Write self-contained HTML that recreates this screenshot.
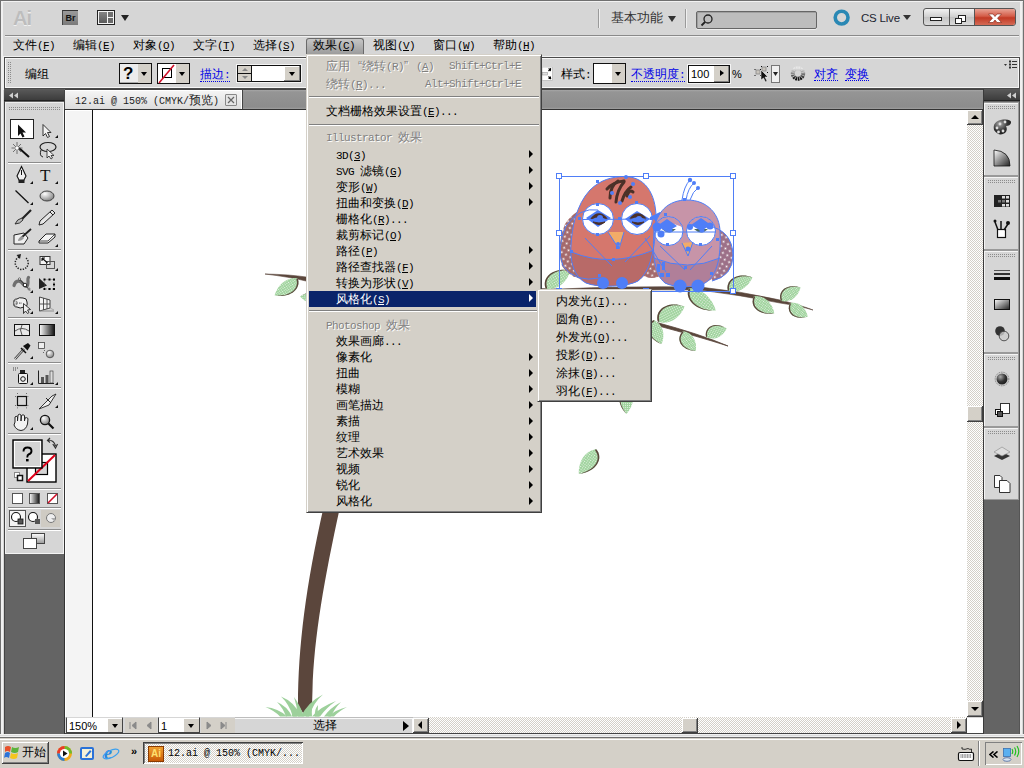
<!DOCTYPE html>
<html><head><meta charset="utf-8">
<style>
*{box-sizing:border-box;margin:0;padding:0}
html,body{width:1024px;height:768px;overflow:hidden;background:#d6d6d6}
body{position:relative;font-family:"Liberation Sans",sans-serif;font-size:12px;color:#000}
.a{position:absolute}
.m{font-family:"Liberation Mono",monospace;font-size:11px;letter-spacing:-0.6px}
.t{white-space:nowrap;line-height:12px}
u{text-decoration:underline}
.hatch{background:repeating-conic-gradient(#d4d0c8 0 25%,#fff 0 50%) 0 0/2px 2px}
.dots{background:linear-gradient(90deg,transparent 1px,#d6d6d6 1px) 0 0/2px 2px,linear-gradient(transparent 1px,#d6d6d6 1px) 0 0/2px 2px,#8c8c8c}
</style></head><body>
<!-- window frame -->
<div class="a" style="left:0;top:0;width:1024px;height:738px;background:#d6d6d6;border:1px solid #707070"></div>
<div class="a" style="left:1px;top:1px;width:1022px;height:1px;background:#f2f2f2"></div>
<div class="a" style="left:1px;top:1px;width:2px;height:735px;background:#f0f0f0"></div>
<div class="a" style="left:1020px;top:1px;width:2px;height:735px;background:#f0f0f0"></div>

<!-- app bar -->
<div id="appbar">
<div class="a" style="left:13px;top:7px;font:bold 20px 'Liberation Sans',sans-serif;color:#bdbdbd;letter-spacing:-1px;text-shadow:0 1px 0 #f0f0f0">Ai</div>
<div class="a" style="left:62px;top:10px;width:16px;height:15px;background:linear-gradient(#9a9a9a,#7a7a7a);border-top:1px solid #333;border-left:1px solid #444;font:bold 9px 'Liberation Sans',sans-serif;color:#111;text-align:center;line-height:14px">Br</div>
<div class="a" style="left:97px;top:10px;width:18px;height:15px;border:1px solid #222;background:#f4f4f4"></div>
<div class="a" style="left:99px;top:12px;width:8px;height:11px;background:linear-gradient(#858585,#5a5a5a)"></div>
<div class="a" style="left:108px;top:12px;width:5px;height:5px;background:#707070"></div>
<div class="a" style="left:108px;top:18px;width:5px;height:5px;background:#6a6a6a"></div>
<div class="a" style="left:121px;top:15px;width:0;height:0;border-left:4px solid transparent;border-right:4px solid transparent;border-top:6px solid #222"></div>
<div class="a" style="left:598px;top:9px;width:1px;height:19px;background:#9a9a9a;box-shadow:1px 0 0 #f0f0f0"></div>
<div class="a t" style="left:611px;top:12px;font-size:13px;color:#333">基本功能</div>
<div class="a" style="left:668px;top:16px;width:0;height:0;border-left:4px solid transparent;border-right:4px solid transparent;border-top:6px solid #333"></div>
<div class="a" style="left:685px;top:9px;width:1px;height:19px;background:#9a9a9a;box-shadow:1px 0 0 #f0f0f0"></div>
<div class="a" style="left:696px;top:11px;width:121px;height:18px;background:#bdbdbd;border:1px solid #666;border-radius:2px;box-shadow:inset 1px 1px 0 #a0a0a0,0 1px 0 #eee"></div>
<svg class="a" style="left:700px;top:13px" width="14" height="14"><circle cx="8" cy="6" r="4" fill="none" stroke="#222" stroke-width="1.3"/><line x1="5" y1="9" x2="1.5" y2="12.5" stroke="#222" stroke-width="1.8"/></svg>
<svg class="a" style="left:833px;top:9px" width="18" height="18"><circle cx="8.6" cy="8.6" r="6.4" fill="none" stroke="#2a88b4" stroke-width="3.6"/></svg>
<div class="a t" style="left:861px;top:12px;font-size:11.5px;color:#1c2530;letter-spacing:-0.2px">CS Live</div>
<div class="a" style="left:903px;top:15px;width:0;height:0;border-left:4px solid transparent;border-right:4px solid transparent;border-top:5px solid #333"></div>
<div class="a" style="left:923px;top:8px;width:93px;height:18px;border:1px solid #555;border-radius:3px;overflow:hidden;background:linear-gradient(#f2f2f2,#cfcfcf 50%,#c2c2c2 51%,#dadada)">
 <div class="a" style="left:25px;top:0;width:1px;height:16px;background:#555"></div>
 <div class="a" style="left:50px;top:0;width:42px;height:16px;background:linear-gradient(#e8a294,#d45c48 45%,#c23a25 55%,#d46a55);border-left:1px solid #555"></div>
 <div class="a" style="left:6px;top:8px;width:12px;height:4px;border:1px solid #222;background:#fff"></div>
 <div class="a" style="left:34px;top:6px;width:8px;height:7px;border:1px solid #222;background:#fff"></div>
 <div class="a" style="left:31px;top:9px;width:7px;height:6px;border:1px solid #222;background:#fff"></div>
 <svg class="a" style="left:58px;top:3px" width="26" height="12"><path d="M6.5 2 L11 2 L13 4.5 L15 2 L19.5 2 L15.5 6.2 L19.5 10.5 L15 10.5 L13 8 L11 10.5 L6.5 10.5 L10.5 6.2Z" fill="#fff" stroke="#7a2010" stroke-width="0.6"/></svg>
</div>
<div class="a" style="left:5px;top:35px;width:1014px;height:1px;background:#8a8a8a"></div>
<div class="a" style="left:5px;top:36px;width:1014px;height:1px;background:#f0f0f0"></div>
</div>

<!-- menu bar -->
<div id="menubar">
<div class="a" style="left:306px;top:38px;width:58px;height:16px;border:1px solid #6a6a6a;border-bottom:none;border-radius:3px 3px 0 0;background:linear-gradient(#c6c6c6,#9c9c9c)"></div>
<div class="a t" style="left:13px;top:39px">文件<span class="m">(<u>F</u>)</span></div>
<div class="a t" style="left:73px;top:39px">编辑<span class="m">(<u>E</u>)</span></div>
<div class="a t" style="left:133px;top:39px">对象<span class="m">(<u>O</u>)</span></div>
<div class="a t" style="left:193px;top:39px">文字<span class="m">(<u>T</u>)</span></div>
<div class="a t" style="left:253px;top:39px">选择<span class="m">(<u>S</u>)</span></div>
<div class="a t" style="left:313px;top:39px">效果<span class="m">(<u>C</u>)</span></div>
<div class="a t" style="left:373px;top:39px">视图<span class="m">(<u>V</u>)</span></div>
<div class="a t" style="left:433px;top:39px">窗口<span class="m">(<u>W</u>)</span></div>
<div class="a t" style="left:493px;top:39px">帮助<span class="m">(<u>H</u>)</span></div>
</div>

<!-- control bar -->
<div id="ctrl">
<div class="a" style="left:4px;top:57px;width:1016px;height:32px;border:1px solid #4a4a4a;background:#d6d6d6;box-shadow:inset 1px 1px 0 #f6f6f6,inset -1px -1px 0 #f6f6f6,0 0 0 1px #f0f0f0"></div>
<div class="a dots" style="left:8px;top:62px;width:4px;height:22px"></div>
<div class="a t" style="left:25px;top:68px">编组</div>
<div class="a" style="left:119px;top:63px;width:33px;height:21px;border:1px solid #111;background:#ececec;box-shadow:inset -1px -1px 0 #aaa"></div>
<div class="a" style="left:138px;top:64px;width:13px;height:19px;background:#d4d0c8"></div>
<div class="a t" style="left:123px;top:64px;font:bold 17px 'Liberation Sans',sans-serif;line-height:20px">?</div>
<div class="a" style="left:141px;top:72px;border-left:3px solid transparent;border-right:3px solid transparent;border-top:4px solid #000"></div>
<div class="a" style="left:157px;top:63px;width:33px;height:21px;border:1px solid #111;background:#fff"></div>
<div class="a" style="left:176px;top:64px;width:13px;height:19px;background:#d4d0c8"></div>
<div class="a" style="left:162px;top:68px;width:10px;height:10px;border:1px solid #000"></div>
<svg class="a" style="left:158px;top:64px" width="18" height="20"><line x1="1" y1="19" x2="16" y2="1" stroke="#d0102a" stroke-width="1.6"/></svg>
<div class="a" style="left:179px;top:72px;border-left:3px solid transparent;border-right:3px solid transparent;border-top:4px solid #000"></div>
<div class="a t" style="left:200px;top:68px;color:#0000e6;border-bottom:1px dotted #0000e6;line-height:12px">描边<span class="m">:</span></div>
<div class="a" style="left:237px;top:65px;width:64px;height:17px;border:1px solid #111;background:#fff;box-shadow:0 0 0 1px #f4f4f4"></div>
<div class="a" style="left:238px;top:66px;width:14px;height:15px;background:#d4d0c8;border-right:1px solid #111"></div>
<div class="a" style="left:238px;top:73px;width:14px;height:1px;background:#111"></div>
<div class="a" style="left:242px;top:68px;border-left:3px solid transparent;border-right:3px solid transparent;border-bottom:3px solid #888"></div>
<div class="a" style="left:242px;top:76px;border-left:3px solid transparent;border-right:3px solid transparent;border-top:3px solid #888"></div>
<div class="a" style="left:284px;top:66px;width:16px;height:15px;background:#d4d0c8;box-shadow:inset -1px -1px 0 #808080,inset 1px 1px 0 #fff"></div>
<div class="a" style="left:289px;top:72px;border-left:3px solid transparent;border-right:3px solid transparent;border-top:4px solid #000"></div>
<!-- right part -->
<svg class="a" style="left:542px;top:67px" width="11" height="14"><rect x="0" y="0" width="10.5" height="13.5" fill="#fff" stroke="#bbb" stroke-width="0.8"/><rect x="0.5" y="5.5" width="5" height="2.5" fill="#e0e0e0" stroke="#999" stroke-width="0.6"/><path d="M6 1.5 L9 1.5 L9 4.5Z M6 12 L9 12 L9 9Z" fill="#000"/><path d="M9 1.5 L6.5 4 M9 12 L6.5 9.5" stroke="#000" stroke-width="1.2"/></svg>
<div class="a t" style="left:561px;top:68px">样式<span class="m">:</span></div>
<div class="a" style="left:593px;top:63px;width:33px;height:21px;border:1px solid #111;background:#fff"></div>
<div class="a" style="left:612px;top:64px;width:13px;height:19px;background:#d4d0c8"></div>
<div class="a" style="left:615px;top:72px;border-left:3px solid transparent;border-right:3px solid transparent;border-top:4px solid #000"></div>
<div class="a t" style="left:631px;top:68px;color:#0000e6;border-bottom:1px dotted #0000e6">不透明度<span class="m">:</span></div>
<div class="a" style="left:688px;top:65px;width:42px;height:18px;border:1px solid #111;background:#fff;box-shadow:0 0 0 1px #f4f4f4"></div>
<div class="a" style="left:714px;top:66px;width:15px;height:16px;background:#d4d0c8;box-shadow:inset -1px -1px 0 #808080"></div>
<div class="a" style="left:720px;top:70px;border-top:3px solid transparent;border-bottom:3px solid transparent;border-left:4px solid #000"></div>
<div class="a t" style="left:691px;top:68px;font-size:11px">100</div>
<div class="a t" style="left:732px;top:68px;font-size:11px">%</div>
<svg class="a" style="left:754px;top:64px" width="28" height="20" viewBox="754 64 28 20"><rect x="756" y="70" width="4" height="4" fill="#c8c4bc" stroke="#888" stroke-width="0.8"/><rect x="762" y="67" width="4" height="4" fill="#c8c4bc" stroke="#888" stroke-width="0.8"/><g fill="#111"><rect x="754.5" y="69" width="1" height="1"/><rect x="754.5" y="75" width="1" height="1"/><rect x="760" y="69" width="1" height="1"/><rect x="760" y="75" width="1" height="1"/><rect x="761" y="66" width="1" height="1"/><rect x="767" y="66" width="1" height="1"/><rect x="767" y="72" width="1" height="1"/></g><path d="M761 70 L768 77 L765 77 L767 81 L765.5 82 L763.5 78 L761 80Z" fill="#111" stroke="#fff" stroke-width="0.5"/><rect x="771.5" y="65.5" width="8" height="17" fill="#f0f0f0" stroke="#777"/><path d="M773 72 L778 72 L775.5 76Z" fill="#222"/></svg>
<svg class="a" style="left:790px;top:66px" width="16" height="16"><defs><linearGradient id="rg1" x1="0" y1="0" x2="0" y2="1"><stop offset="0" stop-color="#e8e8e8"/><stop offset="0.5" stop-color="#888"/><stop offset="1" stop-color="#111"/></linearGradient></defs><circle cx="8" cy="7.5" r="5.2" fill="none" stroke="url(#rg1)" stroke-width="4" stroke-dasharray="1.6 0.6"/></svg>
<div class="a t" style="left:814px;top:68px;color:#0000e6;border-bottom:1px dotted #0000e6">对齐</div>
<div class="a t" style="left:845px;top:68px;color:#0000e6;border-bottom:1px dotted #0000e6">变换</div>
<svg class="a" style="left:1003px;top:60px" width="15" height="10"><path d="M1 4 L4 4 L2.5 6Z" fill="#333"/><g fill="#333"><rect x="6" y="0.5" width="2" height="2"/><rect x="6" y="3.5" width="2" height="2"/><rect x="6" y="6.5" width="2" height="2"/><rect x="9" y="1" width="5" height="1"/><rect x="9" y="4" width="5" height="1"/><rect x="9" y="7" width="5" height="1"/></g></svg>
</div>

<!-- left tools -->
<div id="tools">
<div class="a" style="left:4px;top:89px;width:61px;height:645px;background:#646464;border-left:1px solid #444"></div>
<div class="a" style="left:4px;top:89px;width:60px;height:12px;background:linear-gradient(#5a5a5a,#3c3c3c);border-bottom:1px solid #222"></div>
<svg class="a" style="left:8px;top:92px" width="12" height="7"><path d="M5 0.5 L1 3.5 L5 6.5Z M10 0.5 L6 3.5 L10 6.5Z" fill="#cfcfcf"/></svg>
<div class="a" style="left:5px;top:102px;width:59px;height:452px;background:#d6d6d6;box-shadow:inset 1px 1px 0 #f0f0f0,inset -1px -1px 0 #f4f4f4"></div>
<div class="a" style="left:64px;top:101px;width:1px;height:633px;background:#333"></div>
<div class="a dots" style="left:9px;top:107px;width:52px;height:3px"></div>
<svg class="a" style="left:4px;top:89px" width="61" height="470" viewBox="4 89 61 470">
<defs>
<linearGradient id="gg" x1="0" y1="0" x2="0" y2="1"><stop offset="0" stop-color="#fff"/><stop offset="1" stop-color="#999"/></linearGradient>
<linearGradient id="gh" x1="0" y1="0" x2="1" y2="0"><stop offset="0" stop-color="#fff"/><stop offset="1" stop-color="#111"/></linearGradient>
<radialGradient id="gb" cx="0.35" cy="0.3" r="0.8"><stop offset="0" stop-color="#fff"/><stop offset="1" stop-color="#777"/></radialGradient>
</defs>
<g stroke="#8c8c8c" stroke-width="1">
<line x1="8" y1="162.5" x2="61" y2="162.5"/><line x1="8" y1="317.5" x2="61" y2="317.5"/><line x1="8" y1="249.5" x2="61" y2="249.5"/>
<line x1="8" y1="362.5" x2="61" y2="362.5"/><line x1="8" y1="387.5" x2="61" y2="387.5"/><line x1="8" y1="433.5" x2="61" y2="433.5"/>
<line x1="8" y1="488.5" x2="61" y2="488.5"/><line x1="8" y1="507.5" x2="61" y2="507.5"/><line x1="8" y1="529.5" x2="61" y2="529.5"/>
</g>
<g stroke="#fff" stroke-width="1">
<line x1="8" y1="163.5" x2="61" y2="163.5"/><line x1="8" y1="318.5" x2="61" y2="318.5"/><line x1="8" y1="250.5" x2="61" y2="250.5"/>
<line x1="8" y1="363.5" x2="61" y2="363.5"/><line x1="8" y1="388.5" x2="61" y2="388.5"/><line x1="8" y1="434.5" x2="61" y2="434.5"/>
<line x1="8" y1="489.5" x2="61" y2="489.5"/><line x1="8" y1="508.5" x2="61" y2="508.5"/><line x1="8" y1="530.5" x2="61" y2="530.5"/>
</g>
<!-- corner triangles -->
<g fill="#111">
<path d="M58 135 L58 138 L55 138Z"/><path d="M33 181 L33 184 L30 184Z"/><path d="M58 181 L58 184 L55 184Z"/>
<path d="M33 202 L33 205 L30 205Z"/><path d="M58 202 L58 205 L55 205Z"/><path d="M58 223 L58 226 L55 226Z"/>
<path d="M58 244 L58 247 L55 247Z"/><path d="M33 268 L33 271 L30 271Z"/><path d="M58 268 L58 271 L55 271Z"/>
<path d="M33 290 L33 293 L30 293Z"/><path d="M33 311 L33 314 L30 314Z"/><path d="M58 311 L58 314 L55 314Z"/>
<path d="M33 356 L33 359 L30 359Z"/><path d="M33 382 L33 385 L30 385Z"/><path d="M58 382 L58 385 L55 385Z"/>
<path d="M58 405 L58 408 L55 408Z"/><path d="M33 427 L33 430 L30 430Z"/>
</g>
<!-- select -->
<rect x="10.5" y="119.5" width="23" height="19" fill="#fff" stroke="#222"/>
<path d="M18 124.5 L18 136 L20.5 133.5 L22.5 137.5 L24.5 136.5 L22.5 132.5 L26 132.5Z" fill="#111"/>
<path d="M43 124.5 L43 136 L45.5 133.5 L47.5 137.5 L49.5 136.5 L47.5 132.5 L51 132.5Z" fill="#f2f2f2" stroke="#222" stroke-width="0.9"/>
<!-- wand -->
<path d="M19 148 L29 157" stroke="#111" stroke-width="2"/><path d="M17 142 L17 154 M11.5 148 L22.5 148 M13 144 L21 152 M21 144 L13 152" stroke="#555" stroke-width="0.8"/><circle cx="17" cy="148" r="1.5" fill="#fff"/>
<!-- lasso -->
<ellipse cx="48" cy="147" rx="8" ry="4.5" fill="none" stroke="#222" stroke-width="1.2"/><path d="M41 150 Q39 156 43 157" fill="none" stroke="#222"/><path d="M47 149 L47 158 L49 156 L51 159 L52.5 158 L51 155.5 L54 155.5Z" fill="#eee" stroke="#222" stroke-width="0.8"/>
<!-- pen -->
<path d="M21.5 166.5 L26 176 L24 180 L19 180 L17 176Z" fill="#f0f0f0" stroke="#111" stroke-width="1.1"/><line x1="21.5" y1="170" x2="21.5" y2="175" stroke="#111"/><rect x="18.5" y="180" width="6" height="3" fill="#222"/>
<!-- T -->
<text x="40" y="181" font-family="Liberation Serif" font-size="17" fill="#111">T</text>
<!-- line -->
<line x1="15.5" y1="190.5" x2="28.5" y2="203" stroke="#111" stroke-width="1.3"/>
<!-- ellipse -->
<ellipse cx="47" cy="196" rx="7" ry="5" fill="url(#gb)" stroke="#333" stroke-width="0.9"/>
<!-- brush -->
<path d="M31 210 L22 219" stroke="#222" stroke-width="2.2"/><path d="M22 218 Q17 219 15 224 Q20 224 23 220Z" fill="#bbb" stroke="#222" stroke-width="0.9"/>
<!-- pencil -->
<path d="M52 210 L55 213 L43 224 L39 225 L40 221Z" fill="#e6e6e6" stroke="#222" stroke-width="1"/><path d="M50 212 L53 215" stroke="#222"/>
<!-- blob brush -->
<path d="M14 235 L24 233 L28 238 L24 244 L14 244Z" fill="#efefef" stroke="#222" stroke-width="1"/><path d="M31 229 L21 238" stroke="#222" stroke-width="1.8"/><path d="M22 236 Q18 238 18 241 Q22 241 24 238Z" fill="#999"/>
<!-- eraser -->
<path d="M39 241 L46 234 L55 234 L55 237 L48 243 L39 243Z" fill="#f4f4f4" stroke="#222" stroke-width="1"/><path d="M39 241 L48 241 L55 234" fill="none" stroke="#222" stroke-width="0.8"/>
<!-- rotate -->
<path d="M19 257 A6.5 6.5 0 1 0 26 258" fill="none" stroke="#222" stroke-width="1.5" stroke-dasharray="1.3 1.3"/><path d="M16.5 255 L21 254 L20 259Z" fill="#222"/>
<!-- scale -->
<rect x="40" y="256.5" width="10" height="8" fill="#f6f6f6" stroke="#333"/><rect x="46.5" y="261.5" width="8" height="7" fill="none" stroke="#555"/><path d="M42 258 L47.5 263 M42 258 L42 261 M42 258 L45 258" stroke="#111" stroke-width="1.1"/>
<!-- warp -->
<path d="M14 285.5 C15.5 280 20 280 23 284 C26 288 28 287 28 282 C28 280 27.5 278.5 28.5 277.5" fill="none" stroke="#707070" stroke-width="3.2" stroke-linecap="round"/>
<path d="M19.5 279 L30 290.5" stroke="#222" stroke-width="0.8"/><circle cx="19.5" cy="279" r="1.1" fill="#fff" stroke="#222" stroke-width="0.6"/><circle cx="25" cy="285" r="1.8" fill="#fff" stroke="#111" stroke-width="0.9"/><circle cx="29" cy="289" r="1" fill="#fff" stroke="#222" stroke-width="0.6"/>
<!-- free transform -->
<path d="M39 278 L39 289 L47 285.5Z" fill="#222"/>
<rect x="44.5" y="279.5" width="9.5" height="9.5" fill="none" stroke="#555" stroke-width="0.6" stroke-dasharray="1 1"/>
<g fill="#000"><rect x="43.5" y="278.5" width="2" height="2"/><rect x="48.5" y="278.5" width="2" height="2"/><rect x="53" y="278.5" width="2" height="2"/><rect x="53" y="283.5" width="2" height="2"/><rect x="43.5" y="288" width="2" height="2"/><rect x="48.5" y="288" width="2" height="2"/><rect x="53" y="288" width="2" height="2"/></g>
<!-- shape builder -->
<path d="M14 303 Q13 299 17 299 Q19 297 23 298 Q27 298 27 302 Q28 307 24 307 Q20 309 17 307 Q13 307 14 303Z" fill="#f0f0f0" stroke="#222" stroke-width="1"/><circle cx="15.5" cy="303" r="2" fill="#fff" stroke="#222" stroke-width="0.5"/><circle cx="15" cy="303" r="0.6" fill="#111"/><circle cx="16.5" cy="303" r="0.6" fill="#111"/><circle cx="19.5" cy="303" r="0.5" fill="#111"/><circle cx="21" cy="303" r="0.5" fill="#111"/>
<path d="M23.5 303.5 L23.5 313.5 L25.5 311 L27.5 313.5 L29 312.5 L27.5 310 L30.5 309.5Z" fill="#eee" stroke="#111" stroke-width="0.8"/>
<!-- perspective -->
<path d="M39.5 297 L50 300 L50 308 L39.5 311Z" fill="#f2f2f2" stroke="#333" stroke-width="0.9"/><path d="M43.5 298 L43.5 310 M47 299 L47 309 M39.5 304 L50 304" stroke="#444" stroke-width="0.9"/><path d="M39.5 311 L54 311" stroke="#888" stroke-width="0.9"/><path d="M50 308 L54 310" stroke="#999" stroke-width="0.8"/>
<!-- mesh -->
<rect x="14.5" y="324.5" width="15" height="11" fill="#e8e8e8" stroke="#111"/><path d="M15 331 Q22 326 29 331 M22 325 Q19 330 22 335" fill="none" stroke="#555"/>
<!-- gradient -->
<rect x="39.5" y="324.5" width="15" height="11" fill="url(#gh)" stroke="#111"/>
<!-- eyedropper -->
<path d="M15 359 L24 349" stroke="#444" stroke-width="2.6"/><path d="M15 359 L24 349" stroke="#ddd" stroke-width="1"/><path d="M23 346 L28 343 L30.5 345.5 L27.5 350.5Z" fill="#111"/><path d="M21 348 L26 353" stroke="#111" stroke-width="1.5"/>
<!-- blend -->
<rect x="38.5" y="342.5" width="6" height="6" fill="#eee" stroke="#444" stroke-width="0.8"/><circle cx="50" cy="354" r="3.8" fill="url(#gb)" stroke="#444" stroke-width="0.8"/><path d="M44 350 L45 351 M46 352 L47 353 M43 352 L44 353" stroke="#666"/>
<!-- symbol sprayer -->
<rect x="18.5" y="373.5" width="9" height="10" rx="1" fill="#f0f0f0" stroke="#111"/><circle cx="23" cy="379" r="2.3" fill="none" stroke="#111"/><rect x="20" y="370" width="5" height="3" fill="#222"/><path d="M13 368 h1 M15 368 h1 M17 368 h1 M13 370 h1 M15 370 h1" stroke="#444"/>
<!-- graph -->
<path d="M38.5 370.5 L38.5 383.5 L54 383.5" fill="none" stroke="#222"/><rect x="41" y="377" width="3" height="6" fill="#555"/><rect x="45.5" y="375" width="3" height="8" fill="#555"/><rect x="50" y="371" width="3" height="12" fill="#ddd" stroke="#333" stroke-width="0.6"/>
<!-- artboard -->
<rect x="17.5" y="396.5" width="9" height="9" fill="none" stroke="#111" stroke-width="1.2"/><path d="M15 396.5 h1.5 M27.5 396.5 h1.5 M15 405.5 h1.5 M27.5 405.5 h1.5 M17.5 393 v1.5 M26.5 393 v1.5 M17.5 407.5 v1.5 M26.5 407.5 v1.5" stroke="#555" stroke-dasharray="0.8 0.8"/>
<!-- slice -->
<path d="M39 409 L52 396 L56 394 L49 405Z" fill="#eee" stroke="#222" stroke-width="0.9"/><path d="M46 398 L51 403" stroke="#222"/>
<!-- hand -->
<path d="M15 422 L15 417 Q16 415.5 17.5 417 L17.5 421 L18 415 Q19.5 413.5 21 415 L21 421 L21.5 415.5 Q23 414 24.5 415.5 L24.5 421 L25 418 Q26.5 417 28 418.5 L27.5 424 Q26 430 21 430.5 Q16 430 14 425Z" fill="#f2f2f2" stroke="#222" stroke-width="1"/>
<!-- zoom -->
<circle cx="45" cy="420" r="4.6" fill="url(#gb)" stroke="#111" stroke-width="1.3"/><line x1="48.5" y1="423.5" x2="53.5" y2="428.5" stroke="#111" stroke-width="2.2"/>
<!-- fill/stroke -->
<rect x="27" y="454" width="29" height="28" fill="#fff" stroke="#000" stroke-width="1.4"/>
<rect x="35.5" y="462.5" width="12" height="12" fill="#d4d4d4" stroke="#000" stroke-width="1.2"/>
<line x1="28" y1="481" x2="55" y2="455" stroke="#e0001a" stroke-width="2"/>
<rect x="13" y="440" width="29" height="28" fill="#d4d4d4" stroke="#000" stroke-width="1.4"/>
<rect x="14.5" y="441.5" width="26" height="25" fill="none" stroke="#fff" stroke-width="1"/>
<path d="M23.5 451.5 Q23.5 447.5 27.5 447.5 Q31.5 447.5 31.5 451 Q31.5 453.5 28.5 454.5 Q27.3 455 27.3 457.5" fill="none" stroke="#000" stroke-width="1.9"/><rect x="26" y="459" width="2.6" height="2.4" fill="#000"/>
<path d="M48 440 Q54 440 55.5 446 M52.8 444 L55.5 448 L57.5 444 M50 438 L47.5 440.5 L50 442.5" fill="none" stroke="#333" stroke-width="1.2"/>
<rect x="14.5" y="472.5" width="5" height="5" fill="#fff" stroke="#888"/><rect x="17.5" y="475.5" width="5" height="5" fill="#fff" stroke="#111" stroke-width="1.5"/>
<!-- color/gradient/none -->
<rect x="12.5" y="493.5" width="10" height="10" fill="#fff" stroke="#555"/>
<rect x="29.5" y="493.5" width="10" height="10" fill="url(#gh)" stroke="#555"/>
<rect x="47.5" y="493.5" width="10" height="10" fill="#fff" stroke="#555"/><line x1="48" y1="503" x2="57" y2="494" stroke="#d0102a" stroke-width="1.6"/>
<!-- draw modes -->
<rect x="9.5" y="510.5" width="16" height="16" fill="#f4f4f4" stroke="#555"/>
<rect x="41" y="510" width="19" height="17" fill="#cfcbc3"/>
<circle cx="16" cy="517" r="4.5" fill="#fff" stroke="#111" stroke-width="1.1"/><rect x="18" y="519" width="5" height="5" fill="#555" stroke="#111" stroke-width="0.8"/>
<circle cx="33" cy="517" r="4.5" fill="#fff" stroke="#111" stroke-width="1.1"/><rect x="35" y="519" width="5" height="5" fill="#555"/>
<circle cx="51" cy="518" r="4.5" fill="#eee" stroke="#777" stroke-width="1"/><path d="M51 518 h4 v4" fill="#aaa"/>
<!-- screen mode -->
<rect x="31.5" y="533.5" width="13" height="10" fill="url(#gg)" stroke="#444"/>
<rect x="23.5" y="538.5" width="13" height="10" fill="#fff" stroke="#444"/>
</svg>
</div>

<!-- document -->
<div id="doc">
<div class="a" style="left:65px;top:89px;width:919px;height:21px;background:linear-gradient(#a6a6a6,#959595 10%,#8c8c8c 90%,#a0a0a0);border-top:1px solid #444;border-bottom:1px solid #333"></div>
<div class="a" style="left:64px;top:90px;width:179px;height:19px;background:linear-gradient(#f6f6f6,#dcdcdc);border-left:1px solid #444;border-right:1px solid #444;box-shadow:inset -1px 0 0 #fff,inset 0 1px 0 #fff"></div>
<div class="a t" style="left:75px;top:94px;font-family:'Liberation Mono',monospace;font-size:10px;color:#222;line-height:12px">12.ai @ 150% (CMYK/<span style="font-family:'Liberation Sans';font-size:12px">预览</span>)</div>
<div class="a" style="left:225px;top:94px;width:12px;height:12px;border:1px solid #888;background:#e4e4e4;border-radius:1px"></div>
<svg class="a" style="left:225px;top:94px" width="12" height="12"><path d="M3 3 L9 9 M9 3 L3 9" stroke="#666" stroke-width="1.2"/></svg>
<!-- canvas -->
<div class="a" style="left:64px;top:110px;width:903px;height:607px;background:#f4f4f4;border-left:1px solid #333;box-shadow:inset 1px 1px 0 #fff"></div>
<div class="a" style="left:92px;top:110px;width:875px;height:607px;background:#fff;border-left:1px solid #111"></div>
<!-- vertical scrollbar -->
<div class="a hatch" style="left:967px;top:110px;width:16px;height:607px"></div>
<div class="a" style="left:967px;top:110px;width:16px;height:15px;background:#d4d0c8;box-shadow:inset -1px -1px 0 #404040,inset 1px 1px 0 #fff,inset -2px -2px 0 #808080"></div>
<div class="a" style="left:971px;top:115px;border-left:4px solid transparent;border-right:4px solid transparent;border-bottom:4px solid #000"></div>
<div class="a" style="left:967px;top:406px;width:16px;height:16px;background:#d4d0c8;box-shadow:inset -1px -1px 0 #404040,inset 1px 1px 0 #fff,inset -2px -2px 0 #808080"></div>
<div class="a" style="left:967px;top:701px;width:16px;height:16px;background:#d4d0c8;box-shadow:inset -1px -1px 0 #404040,inset 1px 1px 0 #fff,inset -2px -2px 0 #808080"></div>
<div class="a" style="left:971px;top:707px;border-left:4px solid transparent;border-right:4px solid transparent;border-top:4px solid #000"></div>
<!-- status bar -->
<div class="a" style="left:65px;top:717px;width:918px;height:17px;background:#d6d6d6;border-bottom:1px solid #444"></div>
<div class="a" style="left:66px;top:717px;width:57px;height:16px;background:#fff;border:1px solid #444;border-top-color:#d6d6d6"></div>
<div class="a" style="left:108px;top:719px;width:14px;height:13px;background:#d4d0c8"></div>
<div class="a" style="left:112px;top:724px;border-left:3px solid transparent;border-right:3px solid transparent;border-top:4px solid #000"></div>
<div class="a t" style="left:69px;top:720px;font-size:11px;line-height:12px">150%</div>
<div class="a" style="left:125px;top:718px;width:32px;height:15px;background:#d4d0c8"></div>
<svg class="a" style="left:125px;top:718px" width="32" height="15"><path d="M5 4 v7 M11 4 v7 L7 7.5Z M26 4 v7 L22 7.5Z" fill="#8a8a8a" stroke="#8a8a8a"/></svg>
<div class="a" style="left:158px;top:717px;width:42px;height:16px;background:#fff;border:1px solid #444;border-top-color:#d6d6d6"></div>
<div class="a" style="left:184px;top:719px;width:15px;height:13px;background:#d4d0c8"></div>
<div class="a" style="left:188px;top:724px;border-left:3px solid transparent;border-right:3px solid transparent;border-top:4px solid #000"></div>
<div class="a t" style="left:161px;top:720px;font-size:11px;line-height:12px">1</div>
<div class="a" style="left:201px;top:718px;width:34px;height:15px;background:#d4d0c8"></div>
<svg class="a" style="left:201px;top:718px" width="34" height="15"><path d="M6 4 v7 L10 7.5Z M20 4 v7 L24 7.5Z M25 4 v7" fill="#8a8a8a" stroke="#8a8a8a"/></svg>
<div class="a" style="left:235px;top:717px;width:178px;height:16px;background:#d6d6d6;box-shadow:inset 0 1px 0 #bdbdbd,inset 0 2px 0 #fafafa,inset -1px 0 0 #fafafa"></div>
<div class="a t" style="left:313px;top:719px">选择</div>
<div class="a" style="left:403px;top:721px;border-top:5px solid transparent;border-bottom:5px solid transparent;border-left:6px solid #000"></div>
<div class="a" style="left:413px;top:718px;width:16px;height:15px;background:#d4d0c8;box-shadow:inset -1px -1px 0 #404040,inset 1px 1px 0 #fff,inset -2px -2px 0 #808080"></div>
<div class="a" style="left:418px;top:721px;border-top:4px solid transparent;border-bottom:4px solid transparent;border-right:4px solid #000"></div>
<div class="a hatch" style="left:429px;top:717px;width:538px;height:16px"></div>
<div class="a" style="left:682px;top:718px;width:16px;height:15px;background:#d4d0c8;box-shadow:inset -1px -1px 0 #404040,inset 1px 1px 0 #fff,inset -2px -2px 0 #808080"></div>
<div class="a" style="left:951px;top:718px;width:16px;height:15px;background:#d4d0c8;box-shadow:inset -1px -1px 0 #404040,inset 1px 1px 0 #fff,inset -2px -2px 0 #808080"></div>
<div class="a" style="left:957px;top:721px;border-top:4px solid transparent;border-bottom:4px solid transparent;border-left:4px solid #000"></div>
<div class="a" style="left:967px;top:718px;width:16px;height:15px;background:#fff"></div>
</div>
<svg class="a" style="left:94px;top:110px" width="873" height="607" viewBox="94 110 873 607">
<defs>
<pattern id="dots" width="2" height="2" patternUnits="userSpaceOnUse"><rect width="2" height="2" fill="#9fd39d"/><rect x="1" y="1" width="1" height="1" fill="#e4f2e2"/></pattern>
<pattern id="wd" width="5" height="5" patternUnits="userSpaceOnUse" patternTransform="rotate(30)"><rect width="5" height="5" fill="#a46a6c"/><circle cx="2.5" cy="2.5" r="1" fill="#fff"/></pattern>
<pattern id="wd2" width="5" height="5" patternUnits="userSpaceOnUse" patternTransform="rotate(30)"><rect width="5" height="5" fill="#9c7088"/><circle cx="2.5" cy="2.5" r="1" fill="#fff"/></pattern>
<g id="leaf"><path d="M0 0 C2 -11 17 -13 28 -1 C19 6 8 7 0 0Z" fill="url(#dots)"/><path d="M0 0 C2 -11 17 -13 28 -1 C17 -11 4 -10 1.5 0Z" fill="#5b463c"/></g>
</defs>
<!-- trunk -->
<path d="M330 480 L346 480 C328 560 314 630 312.5 690 L312 706 L303 713 L298 705 C298 640 308 570 330 480Z" fill="#5b463c"/>
<!-- grass -->
<g fill="#9dd09b">
<path d="M265.5 707 Q278 708 287 716.5 L280 716.5 Q275 711 265.5 707Z"/>
<path d="M277 702 Q287 706 292 716.5 L286 716.5 Q283 708 277 702Z"/>
<path d="M281 696.5 Q295 702 301 716.5 L293 716.5 Q289 704 281 696.5Z"/>
<path d="M294 697 Q300 705 304 716.5 L298 716.5 Q297 706 294 697Z"/>
<path d="M289 703 Q295 708 297 716.5 L292 716.5 Q292 709 289 703Z"/>
<path d="M323 694.5 Q308 702 301 716.5 L309 716.5 Q313 703 323 694.5Z"/>
<path d="M315 700 Q307 707 306 716.5 L312 716.5 Q311 707 315 700Z"/>
<path d="M336 701 Q320 707 312 716.5 L320 716.5 Q326 708 336 701Z"/>
<path d="M341 702 Q330 708 324 716.5 L331 716.5 Q334 709 341 702Z"/>
<path d="M347 707 Q335 710 328 716.5 L334 716.5 Q339 711 347 707Z"/>
<path d="M318 705 Q314 710 315 716.5 L319 716.5 Q317 711 318 705Z"/>
</g>
<!-- branches -->
<path d="M265 274 Q290 274.5 306 277 Q420 286 560 289 Q620 286 700 287 Q740 291 780 300 Q800 305 813 310 Q800 306 780 303 Q740 295 700 290 Q620 289 560 293 Q420 292 306 281 Q290 277 265 274Z" fill="#5b463c" stroke="#5b463c" stroke-width="0.6"/>
<path d="M560 296 Q610 310 655 322 Q700 334 728 346 Q700 337 655 325 Q610 314 560 300Z" fill="#5b463c" stroke="#5b463c" stroke-width="0.8"/>
<!-- leaves -->
<use href="#leaf" transform="translate(297.5 278) rotate(145) scale(1.03 1)"/>
<use href="#leaf" transform="translate(326 302) rotate(190) scale(0.95 -0.9)"/>
<use href="#leaf" transform="translate(728 291) rotate(-27) scale(1 1)"/>
<use href="#leaf" transform="translate(689 288) rotate(38) scale(1.25 -1.1)"/>
<use href="#leaf" transform="translate(754 296) rotate(38) scale(0.95 -1)"/>
<use href="#leaf" transform="translate(781 301) rotate(-32) scale(0.85 0.95)"/>
<use href="#leaf" transform="translate(790 303) rotate(35) scale(0.8 -0.95)"/>
<use href="#leaf" transform="translate(658 322) rotate(-28) scale(1.1 1.15)"/>
<use href="#leaf" transform="translate(683 331) rotate(55) scale(0.85 -1)"/>
<use href="#leaf" transform="translate(706 337) rotate(-20) scale(0.8 0.95)"/>
<use href="#leaf" transform="translate(546 289) rotate(-35) scale(1.1 1.1)"/>
<use href="#leaf" transform="translate(654 320) rotate(70) scale(0.9 -1)"/>
<use href="#leaf" transform="translate(596 449) rotate(127) scale(1.08 1.1)"/>
<use href="#leaf" transform="translate(629 386) rotate(93) scale(1 -1)"/>
<!-- owl 1 -->
<path d="M598 208 Q578 205 565 224 Q556 246 562 266 Q574 284 600 278Z" fill="url(#wd)"/>
<path d="M645 238 Q668 240 666 272 Q652 284 638 272Z" fill="url(#wd)"/>
<path d="M625 176.5 C648 177 657 198 656 222 C655 250 650 272 638 281 C628 287 598 288 586 283 C573 276 570 260 571 245 C572 228 576 205 590 190 C600 180 612 176.5 625 176.5Z" fill="#d5776d"/>
<path d="M571.2 252 Q610 268 654.5 250 C653 266 647 275 638 281 C628 287 598 288 586 283 C573 276 570 262 571.2 252Z" fill="#b86a68"/>
<g stroke="#4b3028" stroke-width="3" fill="none" stroke-linecap="round"><path d="M610 198 Q610 186 618 181"/><path d="M616 202 Q617 190 624 182"/><path d="M622 201 Q625 191 631 187"/><path d="M607 189 Q613 182 624 181"/><path d="M627 196 Q629 189 633 192"/></g>
<circle cx="598" cy="219" r="15.5" fill="#fff"/>
<circle cx="637" cy="219" r="15.5" fill="#fff"/>
<path d="M586 218 L598 210 L611 218 L598 227Z M625 219 L637 211 L650 219 L637 228Z" fill="#4f7ef7"/>
<path d="M650 217 L660 212 L668 218 L660 224Z" fill="#4f7ef7"/>
<path d="M591 219 Q599 209 607 219 Q599 214 591 219Z" fill="#4b3028" stroke="#4b3028" stroke-width="1.5"/><path d="M593 222 Q599 227 605 222 Q599 224 593 222Z" fill="#4b3028" stroke="#4b3028"/><path d="M630 219 Q638 209 646 219 Q638 214 630 219Z" fill="#4b3028" stroke="#4b3028" stroke-width="1.5"/><path d="M632 222 Q638 227 644 222 Q638 224 632 222Z" fill="#4b3028" stroke="#4b3028"/>
<path d="M608 232 L624 232 L619 249Z" fill="#f2ab68"/>
<!-- owl 2 -->
<path d="M708 226 Q732 230 733 255 Q733 276 712 281Z" fill="url(#wd2)"/>
<path d="M687 200 C708 200 720 215 720 232 C721 255 718 275 705 283 C695 288 675 288 665 283 C655 275 652 255 654 232 C656 212 668 200 687 200Z" fill="#c794a8"/>
<path d="M653.5 258 Q688 272 720 258 C719 272 714 279 705 283 C695 288 675 288 665 283 C657 277 654 268 653.5 258Z" fill="#b07f99"/>
<circle cx="668.5" cy="231" r="14.5" fill="#fff"/>
<circle cx="701" cy="231" r="14.5" fill="#fff"/>
<path d="M654.56 227 A14.5 14.5 0 0 1 682.44 227 Q668.5 220 654.56 227Z" fill="#c794a8"/><path d="M687.06 227 A14.5 14.5 0 0 1 714.94 227 Q701 220 687.06 227Z" fill="#c794a8"/>
<path d="M662 229 Q669 236 676 229Z" fill="#4d6a5c"/><path d="M694 229 Q701 236 708 229Z" fill="#4d6a5c"/>
<path d="M682 243 L693 242 L688 256Z" fill="#f2ab68"/>
<path d="M657 226 L667 219 L677 226 L667 232Z M691 225 L701 218 L711 225 L701 231Z" fill="#4f7ef7"/>
<!-- selection paths -->
<g fill="none" stroke="#4f7ef7" stroke-width="1">
<path d="M625 176.5 C648 177 657 198 656 222 C655 250 650 272 638 281 C628 287 598 288 586 283 C573 276 570 260 571 245 C572 228 576 205 590 190 C600 180 612 176.5 625 176.5Z"/>
<path d="M687 200 C708 200 720 215 720 232 C721 255 718 275 705 283 C695 288 675 288 665 283 C655 275 652 255 654 232 C656 212 668 200 687 200Z"/>
<path d="M571.5 252 Q610 268 654 250"/><path d="M653.5 258 Q688 272 720 258"/>
<path d="M598 210 Q580 207 566 226 Q556 248 563 266 Q575 283 600 278"/><path d="M708 226 Q732 230 733 255 Q733 276 712 281"/>
<circle cx="598" cy="219" r="15.5"/><circle cx="637" cy="219" r="15.5"/><circle cx="668.5" cy="231" r="14.5"/><circle cx="701" cy="231" r="14.5"/>
<path d="M583 219.5 L652 219 M655 232 L716 232 M608 232 L619 249 M624 232 L619 249 M585 238 L612 266 M650 236 L625 262"/>
<path d="M660 246 L685 270 M712 246 L690 270 M682 243 L688 256 L693 242 M645 238 L666 272"/>
<path d="M682 200 Q684 186 690 180 M686 200 Q688 188 694 183 M690 200 Q693 191 698 188"/>
</g>
<g fill="#4f7ef7">
<circle cx="603" cy="283" r="6"/><circle cx="622" cy="283" r="6"/><circle cx="680" cy="286" r="6.5"/><circle cx="698" cy="286" r="6.5"/>
<circle cx="657" cy="227" r="4.5"/><circle cx="661" cy="234" r="3.5"/><circle cx="690" cy="227" r="3"/><circle cx="710" cy="226" r="3.5"/><circle cx="702" cy="222" r="2.5"/>
<circle cx="690" cy="180" r="2.2"/><circle cx="694" cy="183" r="2"/><circle cx="698" cy="188" r="2"/>
<circle cx="626" cy="177" r="2"/><circle cx="633" cy="184" r="2"/><circle cx="612" cy="193" r="2"/><circle cx="620" cy="203" r="2"/><circle cx="630" cy="197" r="2"/>
<circle cx="600" cy="218" r="3"/><circle cx="639" cy="219" r="3"/><circle cx="670" cy="230" r="2.5"/><circle cx="702" cy="230" r="2.5"/><circle cx="688" cy="249" r="2.5"/><circle cx="618" cy="244" r="2"/>
<rect x="578" y="217" width="3" height="3"/><rect x="596" y="203" width="3" height="3"/><rect x="596" y="233" width="3" height="3"/><rect x="612" y="258" width="3" height="3"/><rect x="598" y="274" width="3" height="3"/>
<rect x="635" y="201" width="3" height="3"/><rect x="618" y="217" width="3" height="3"/><rect x="650" y="217" width="3" height="3"/><rect x="616" y="246" width="3" height="3"/><rect x="570" y="250" width="3" height="3"/><rect x="596" y="180" width="3" height="3"/>
<rect x="666" y="243" width="3" height="3"/><rect x="699" y="243" width="3" height="3"/><rect x="716" y="238" width="3" height="3"/><rect x="684" y="266" width="3" height="3"/><rect x="710" y="272" width="3" height="3"/><rect x="664" y="213" width="3" height="3"/><rect x="683" y="198" width="3" height="3"/>
<rect x="662" y="262" width="3" height="8"/><rect x="657" y="264" width="3" height="8"/><rect x="660" y="273" width="4" height="4"/><rect x="666" y="273" width="4" height="4"/>
</g>
<!-- bounding box -->
<rect x="559.5" y="176.5" width="174" height="115" fill="none" stroke="#4f7ef7" stroke-width="1"/>
<g fill="#fff" stroke="#4f7ef7" stroke-width="1">
<rect x="556.5" y="173.5" width="5" height="5"/><rect x="643.5" y="173.5" width="5" height="5"/><rect x="730.5" y="173.5" width="5" height="5"/>
<rect x="556.5" y="230.5" width="5" height="5"/><rect x="730.5" y="230.5" width="5" height="5"/>
<rect x="556.5" y="288.5" width="5" height="5"/><rect x="643.5" y="288.5" width="5" height="5"/><rect x="730.5" y="288.5" width="5" height="5"/>
</g>
</svg>

<!-- right dock -->
<div id="dock">
<div class="a" style="left:983px;top:89px;width:37px;height:645px;background:#646464;border-left:1px solid #3a3a3a;border-right:1px solid #555"></div>
<div class="a" style="left:984px;top:89px;width:36px;height:12px;background:linear-gradient(#5a5a5a,#3c3c3c);border-bottom:1px solid #222"></div>
<svg class="a" style="left:1006px;top:92px" width="12" height="7"><path d="M5 0.5 L1 3.5 L5 6.5Z M10 0.5 L6 3.5 L10 6.5Z" fill="#cfcfcf"/></svg>
<div class="a" style="left:984px;top:102px;width:35px;height:74px;background:#d6d6d6;border:1px solid #9a9a9a;border-left:none;box-shadow:inset 1px 1px 0 #f4f4f4"></div>
<div class="a" style="left:984px;top:176px;width:35px;height:74px;background:#d6d6d6;border:1px solid #9a9a9a;border-left:none;box-shadow:inset 1px 1px 0 #f4f4f4"></div>
<div class="a" style="left:984px;top:250px;width:35px;height:103px;background:#d6d6d6;border:1px solid #9a9a9a;border-left:none;box-shadow:inset 1px 1px 0 #f4f4f4"></div>
<div class="a" style="left:984px;top:353px;width:35px;height:74px;background:#d6d6d6;border:1px solid #9a9a9a;border-left:none;box-shadow:inset 1px 1px 0 #f4f4f4"></div>
<div class="a" style="left:984px;top:427px;width:35px;height:73px;background:#d6d6d6;border:1px solid #9a9a9a;border-left:none;box-shadow:inset 1px 1px 0 #f4f4f4"></div>
<div class="a dots" style="left:988px;top:106px;width:28px;height:3px"></div>
<div class="a dots" style="left:988px;top:180px;width:28px;height:3px"></div>
<div class="a dots" style="left:988px;top:254px;width:28px;height:3px"></div>
<div class="a dots" style="left:988px;top:357px;width:28px;height:3px"></div>
<div class="a dots" style="left:988px;top:431px;width:28px;height:3px"></div>
<svg class="a" style="left:984px;top:100px" width="36" height="402" viewBox="984 100 36 402">
<defs>
<radialGradient id="dk" cx="0.35" cy="0.3" r="0.9"><stop offset="0" stop-color="#aaa"/><stop offset="0.5" stop-color="#333"/><stop offset="1" stop-color="#111"/></radialGradient>
<linearGradient id="dg" x1="0" y1="0" x2="1" y2="1"><stop offset="0" stop-color="#fff"/><stop offset="1" stop-color="#222"/></linearGradient>
</defs>

<!-- palette -->
<path d="M994 130 Q992 121 1003 119.5 Q1012 119 1011 123 Q1010 126 1006 126 Q1008 130 1005 133 Q999 137 994 130Z" fill="url(#dk)"/>
<circle cx="997" cy="128" r="1.4" fill="#ddd"/><circle cx="1000" cy="124" r="1.4" fill="#ddd"/><circle cx="1005" cy="122" r="1.4" fill="#ddd"/><circle cx="998.5" cy="132" r="1.4" fill="#ddd"/><circle cx="1003" cy="131" r="1.4" fill="#ddd"/>
<!-- color guide quarter -->
<path d="M994 150 L994 166 L1010 166 Q1010 151 994 150Z" fill="url(#dg)" stroke="#111" stroke-width="0.8"/>
<!-- swatches -->
<rect x="994" y="195" width="16" height="12" fill="#222"/><g fill="#ddd"><rect x="1002" y="196" width="3" height="2.5"/><rect x="1006" y="196" width="3" height="2.5"/><rect x="1006" y="200" width="3" height="2.5"/><rect x="1002" y="204" width="3" height="2.5"/><rect x="1006" y="204" width="3" height="2.5"/></g><g fill="#777"><rect x="998" y="200" width="3" height="2.5"/><rect x="1002" y="200" width="3" height="2.5"/></g>
<!-- brushes -->
<rect x="997.5" y="229.5" width="8" height="8" fill="#fff" stroke="#111" stroke-width="1.2"/><path d="M998 230 L995 222 M1001 230 L1001 221 M1004 230 L1008 224" stroke="#111" stroke-width="1.5"/><circle cx="1008" cy="223" r="2" fill="#111"/><circle cx="995" cy="221" r="1.5" fill="#111"/>
<!-- stroke -->
<rect x="994" y="270" width="16" height="1" fill="#555"/><rect x="994" y="273" width="16" height="2" fill="#333"/><rect x="994" y="277" width="16" height="3" fill="#111"/>
<!-- gradient -->
<rect x="994.5" y="299.5" width="15" height="10" fill="url(#dg)" stroke="#111"/>
<!-- transparency -->
<circle cx="1000" cy="331" r="4.8" fill="#333"/><circle cx="1004" cy="336" r="4.8" fill="#ccc" fill-opacity="0.8" stroke="#333" stroke-width="0.8"/>
<!-- appearance -->
<circle cx="1002" cy="379" r="6.8" fill="none" stroke="#777" stroke-dasharray="1 0.8"/><circle cx="1002" cy="379" r="5.5" fill="url(#dk)"/>
<!-- graphic styles -->
<rect x="1000.5" y="403.5" width="9" height="10" fill="#fff" stroke="#333"/><rect x="995.5" y="409.5" width="5" height="5" fill="#fff" stroke="#111"/><rect x="997.5" y="411.5" width="5" height="5" fill="#555" stroke="#111"/>
<!-- layers -->
<path d="M994 456 L1002 452 L1010 456 L1002 460Z" fill="#333"/><path d="M994 452 L1002 447 L1010 452 L1002 456Z" fill="#ddd" stroke="#888" stroke-width="0.6"/>
<!-- artboards -->
<path d="M994.5 475.5 L1000 475.5 L1002 477.5 L1002 487.5 L994.5 487.5Z" fill="#fff" stroke="#333"/><path d="M999.5 480.5 L1007 480.5 L1010 483.5 L1010 492.5 L999.5 492.5Z" fill="#fff" stroke="#333"/>
</svg>
</div>

<!-- taskbar -->
<div id="taskbar">
<div class="a" style="left:0;top:734px;width:1024px;height:4px;background:linear-gradient(#f0f0f0 25%,#dcdcdc 25%,#dcdcdc 50%,#f0f0f0 50%,#f0f0f0 75%,#6e6e6e 75%)"></div>
<div class="a" style="left:0;top:738px;width:1024px;height:30px;background:#d4d0c8;border-top:1px solid #d4d0c8;box-shadow:inset 0 1px 0 #fff"></div>
<div class="a" style="left:2px;top:742px;width:47px;height:22px;background:#d4d0c8;box-shadow:inset -1px -1px 0 #404040,inset 1px 1px 0 #fff,inset -2px -2px 0 #808080"></div>
<svg class="a" style="left:4px;top:744px" width="16" height="16"><path d="M1 3 Q4 1 7 3 L6 8 Q3 6 1 8Z" fill="#e8512a"/><path d="M8 3 Q11 5 15 3 L14 8 Q11 10 7 8Z" fill="#5db33a"/><path d="M1 9 Q4 7 6 9 L5 14 Q2 12 0 14Z" fill="#2b73d8"/><path d="M7 9 Q10 11 14 9 L13 14 Q10 16 6 14Z" fill="#f5c51e"/></svg>
<div class="a t" style="left:22px;top:746px;font-size:12px;line-height:13px">开始</div>
<svg class="a" style="left:56px;top:745px" width="17" height="17"><circle cx="8.5" cy="8.5" r="7.5" fill="#f2a81a"/><path d="M8.5 1 A7.5 7.5 0 0 1 16 8.5 L8.5 8.5Z" fill="#6cbb2d"/><path d="M1 8.5 A7.5 7.5 0 0 1 8.5 1 L8.5 8.5Z" fill="#e83a2a"/><path d="M1 8.5 A7.5 7.5 0 0 0 8.5 16 L8.5 8.5Z" fill="#2a7ed6"/><circle cx="8.5" cy="8.5" r="4.6" fill="#fff"/><path d="M7 5.5 L11.5 8.5 L7 11.5Z" fill="#111"/></svg>
<svg class="a" style="left:79px;top:745px" width="17" height="17"><rect x="1" y="2" width="14" height="13" rx="2" fill="#2a72d8"/><rect x="3" y="4" width="10" height="9" fill="#f4f0d8"/><path d="M6 11 L11 5 L12.5 6.5 L7.5 12Z" fill="#2a72d8"/></svg>
<svg class="a" style="left:102px;top:744px" width="18" height="18"><text x="2" y="15" font-family="Liberation Serif" font-style="italic" font-weight="bold" font-size="18" fill="#2a86e0">e</text><ellipse cx="9" cy="10" rx="8.5" ry="3.5" fill="none" stroke="#3aa0f0" stroke-width="1.2" transform="rotate(-25 9 10)"/></svg>
<div class="a t" style="left:131px;top:745px;font:bold 11px 'Liberation Sans',sans-serif">»</div>
<div class="a hatch" style="left:143px;top:742px;width:160px;height:22px;box-shadow:inset 1px 1px 0 #404040,inset -1px -1px 0 #fff,inset 2px 2px 0 #808080"></div>
<div class="a" style="left:148px;top:746px;width:16px;height:16px;background:linear-gradient(#f0a030,#c85a08);border:1px solid #8a3a00;font:bold 10px 'Liberation Sans',sans-serif;color:#ffe070;line-height:14px;text-align:center">Ai</div>
<div class="a t" style="left:168px;top:748px;font-family:'Liberation Mono',monospace;font-size:10px;line-height:12px">12.ai @ 150% (CMYK/...</div>
<div class="a" style="left:956px;top:745px;width:18px;height:14px"></div>
<svg class="a" style="left:957px;top:746px" width="18" height="16"><rect x="1.5" y="6.5" width="15" height="8" rx="1.5" fill="#fff" stroke="#111" stroke-width="1.2"/><path d="M3.5 9 h11 M3.5 11 h11" stroke="#333" stroke-dasharray="1 0.6"/><path d="M5 1 L5 3 Q8 4 11 2.5 Q13 4 14.5 3 L14.5 6" fill="none" stroke="#222" stroke-width="0.9"/></svg>
<div class="a" style="left:978px;top:741px;width:1px;height:25px;background:#808080;box-shadow:1px 0 0 #fff"></div>
<div class="a" style="left:985px;top:742px;width:37px;height:23px;box-shadow:inset 1px 1px 0 #808080,inset -1px -1px 0 #fff"></div>
<svg class="a" style="left:989px;top:751px" width="10" height="7"><path d="M4.5 0.5 L1 3.5 L4.5 6.5 M8.5 0.5 L5 3.5 L8.5 6.5" fill="none" stroke="#000" stroke-width="1.6"/></svg>
<svg class="a" style="left:1002px;top:745px" width="20" height="18"><rect x="1.5" y="3.5" width="7" height="8" fill="#5ab0f0" stroke="#3a70b0" stroke-width="0.8"/><ellipse cx="5" cy="14.5" rx="4" ry="1.8" fill="#d8e4f0" stroke="#3a5a9a" stroke-width="0.7"/><path d="M10 4 Q11.5 6.5 10 9 M12.5 2.5 Q15 6.5 12.5 10.5 M15 1 Q18.5 6.5 15 12" fill="none" stroke="#22c022" stroke-width="1.2"/></svg>
</div>

<!-- menus -->
<div id="menu">
<div class="a" style="left:306px;top:54px;width:236px;height:459px;background:#d4d0c8;border:1px solid;border-color:#d4d0c8 #404040 #404040 #d4d0c8;box-shadow:inset 1px 1px 0 #fff,inset -1px -1px 0 #808080"></div>
<div class="a" style="left:309px;top:96px;width:230px;height:1px;background:#808080;box-shadow:0 1px 0 #fff"></div>
<div class="a" style="left:309px;top:124px;width:230px;height:1px;background:#808080;box-shadow:0 1px 0 #fff"></div>
<div class="a" style="left:309px;top:291px;width:227px;height:16px;background:#0a246a"></div>
<div class="a" style="left:309px;top:310px;width:230px;height:1px;background:#808080;box-shadow:0 1px 0 #fff"></div>
<div class="a t" style="left:326px;top:60px;color:#808080;text-shadow:1px 1px 0 #fff">应用<span style="display:inline-block;width:12px;text-align:right">“</span>绕转<span class="m">(R)</span><span style="display:inline-block;width:12px">”</span><span class="m">(<u>A</u>)</span></div>
<div class="a t m" style="left:449px;top:60px;color:#808080;text-shadow:1px 1px 0 #fff">Shift+Ctrl+E</div>
<div class="a t" style="left:326px;top:78px;color:#808080;text-shadow:1px 1px 0 #fff">绕转<span class="m">(<u>R</u>)...</span></div>
<div class="a t m" style="left:425px;top:78px;color:#808080;text-shadow:1px 1px 0 #fff">Alt+Shift+Ctrl+E</div>
<div class="a t" style="left:326px;top:105px">文档栅格效果设置<span class="m">(<u>E</u>)...</span></div>
<div class="a t" style="left:326px;top:131px;color:#808080;text-shadow:1px 1px 0 #fff"><span class="m">Illustrator </span>效果</div>
<div class="a t" style="left:336px;top:149px"><span class="m">3D(<u>3</u>)</span></div>
<div class="a t" style="left:336px;top:165px"><span class="m">SVG </span>滤镜<span class="m">(<u>G</u>)</span></div>
<div class="a t" style="left:336px;top:181px">变形<span class="m">(<u>W</u>)</span></div>
<div class="a t" style="left:336px;top:197px">扭曲和变换<span class="m">(<u>D</u>)</span></div>
<div class="a t" style="left:336px;top:213px">栅格化<span class="m">(<u>R</u>)...</span></div>
<div class="a t" style="left:336px;top:229px">裁剪标记<span class="m">(<u>O</u>)</span></div>
<div class="a t" style="left:336px;top:245px">路径<span class="m">(<u>P</u>)</span></div>
<div class="a t" style="left:336px;top:261px">路径查找器<span class="m">(<u>F</u>)</span></div>
<div class="a t" style="left:336px;top:277px">转换为形状<span class="m">(<u>V</u>)</span></div>
<div class="a t" style="left:336px;top:293px;color:#fff">风格化<span class="m">(<u>S</u>)</span></div>
<div class="a t" style="left:326px;top:319px;color:#808080;text-shadow:1px 1px 0 #fff"><span class="m">Photoshop </span>效果</div>
<div class="a t" style="left:336px;top:335px">效果画廊<span class="m">...</span></div>
<div class="a t" style="left:336px;top:351px">像素化</div>
<div class="a t" style="left:336px;top:367px">扭曲</div>
<div class="a t" style="left:336px;top:383px">模糊</div>
<div class="a t" style="left:336px;top:399px">画笔描边</div>
<div class="a t" style="left:336px;top:415px">素描</div>
<div class="a t" style="left:336px;top:431px">纹理</div>
<div class="a t" style="left:336px;top:447px">艺术效果</div>
<div class="a t" style="left:336px;top:463px">视频</div>
<div class="a t" style="left:336px;top:479px">锐化</div>
<div class="a t" style="left:336px;top:495px">风格化</div>
<svg class="a" style="left:526px;top:140px" width="10" height="370" viewBox="526 140 10 370"><g fill="#000">
<path d="M529 150 L533 154 L529 158Z"/><path d="M529 166 L533 170 L529 174Z"/><path d="M529 182 L533 186 L529 190Z"/><path d="M529 198 L533 202 L529 206Z"/>
<path d="M529 246 L533 250 L529 254Z"/><path d="M529 262 L533 266 L529 270Z"/><path d="M529 278 L533 282 L529 286Z"/><path d="M529 294 L533 298 L529 302Z" fill="#fff"/>
<path d="M529 353 L533 357 L529 361Z"/><path d="M529 369 L533 373 L529 377Z"/><path d="M529 385 L533 389 L529 393Z"/><path d="M529 401 L533 405 L529 409Z"/>
<path d="M529 417 L533 421 L529 425Z"/><path d="M529 433 L533 437 L529 441Z"/><path d="M529 449 L533 453 L529 457Z"/><path d="M529 465 L533 469 L529 473Z"/>
<path d="M529 481 L533 485 L529 489Z"/><path d="M529 497 L533 501 L529 505Z"/>
</g></svg>
<!-- submenu -->
<div class="a" style="left:537px;top:289px;width:115px;height:113px;background:#d4d0c8;border:1px solid;border-color:#d4d0c8 #404040 #404040 #d4d0c8;box-shadow:inset 1px 1px 0 #fff,inset -1px -1px 0 #808080"></div>
<div class="a t" style="left:556px;top:295px">内发光<span class="m">(<u>I</u>)...</span></div>
<div class="a t" style="left:556px;top:313px">圆角<span class="m">(<u>R</u>)...</span></div>
<div class="a t" style="left:556px;top:331px">外发光<span class="m">(<u>O</u>)...</span></div>
<div class="a t" style="left:556px;top:349px">投影<span class="m">(<u>D</u>)...</span></div>
<div class="a t" style="left:556px;top:367px">涂抹<span class="m">(<u>B</u>)...</span></div>
<div class="a t" style="left:556px;top:385px">羽化<span class="m">(<u>F</u>)...</span></div>
</div>
</body></html>
